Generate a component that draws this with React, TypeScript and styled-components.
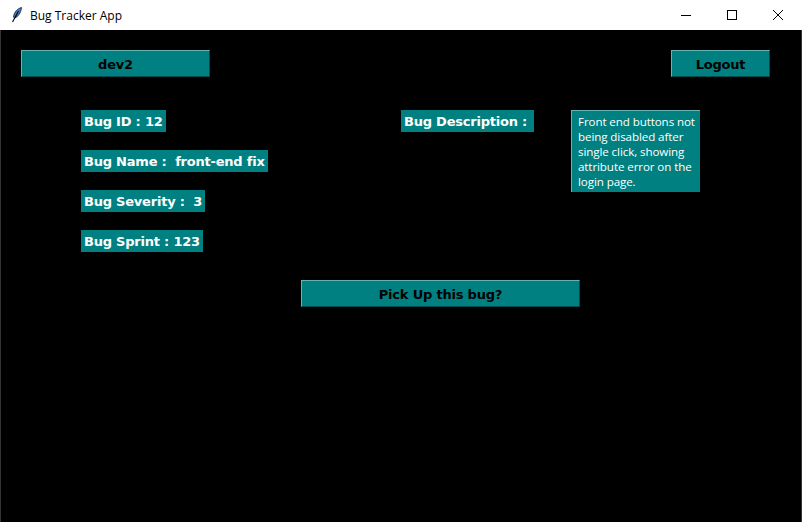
import React from 'react'
import styled, { createGlobalStyle } from 'styled-components'

const TEAL = '#008080'

const GlobalStyle = createGlobalStyle`
  html, body {
    margin: 0;
    padding: 0;
    background: #000;
  }
`

const Window = styled.div`
  width: 802px;
  height: 522px;
  display: flex;
  flex-direction: column;
  overflow: hidden;
  background: #000;
`

const TitleBar = styled.div`
  height: 30px;
  flex: none;
  display: flex;
  align-items: center;
  background: #fff;
  padding: 0 1px 0 11px;
`

const AppIcon = styled.svg`
  width: 12px;
  height: 16px;
  margin-right: 7px;
`

const Title = styled.span`
  font: 12px 'Open Sans', sans-serif;
  color: #000;
  flex: 1;
`

const WinButton = styled.div`
  width: 46px;
  height: 30px;
  display: flex;
  align-items: center;
  justify-content: center;
`

const Body = styled.div`
  flex: 1;
  display: flex;
  flex-direction: column;
  padding: 20px 32px 0 21px;
  box-shadow: inset 1px 0 0 #333, inset -1px 0 0 #333;
`

const TopRow = styled.div`
  display: flex;
  justify-content: space-between;
`

const TkButton = styled.div<{ $width: number }>`
  width: ${p => p.$width}px;
  height: 27px;
  box-sizing: border-box;
  padding-top: 2px;
  display: flex;
  align-items: center;
  justify-content: center;
  background: ${TEAL};
  border-style: solid;
  border-width: 1px;
  border-color: #66b3b3 #004d4d #004d4d #66b3b3;
  color: #000;
  font: bold 13px 'DejaVu Sans', Verdana, sans-serif;
  letter-spacing: -0.2px;
`

const Details = styled.div`
  display: flex;
  margin: 33px 0 0 60px;
`

const LeftColumn = styled.div`
  width: 320px;
  display: flex;
  flex-direction: column;
  align-items: flex-start;
  gap: 18px;
`

const Field = styled.div`
  height: 22px;
  padding: 0 3px;
  display: flex;
  align-items: center;
  background: ${TEAL};
  color: #fff;
  font: bold 13px 'DejaVu Sans', Verdana, sans-serif;
  letter-spacing: -0.22px;
  white-space: pre;
`

const DescriptionLabel = styled(Field)`
  width: 133px;
  box-sizing: border-box;
  margin-right: 37px;
`

const DescriptionBox = styled.div`
  width: 129px;
  height: 82px;
  box-sizing: border-box;
  padding: 3px 0 0 6px;
  background: ${TEAL};
  border-style: solid;
  border-width: 1px 0 0 1px;
  border-color: #66b3b3;
  color: #fff;
  font: 11.6px/15px 'Open Sans', Tahoma, sans-serif;
  letter-spacing: -0.1px;
  white-space: pre;
`

const ActionRow = styled.div`
  margin: 28px 0 0 280px;
`

const fields = ['Bug ID : 12', 'Bug Name :  front-end fix', 'Bug Severity :  3', 'Bug Sprint : 123']

const description = [
  'Front end buttons not',
  'being disabled after',
  'single click, showing',
  'attribute error on the',
  'login page.',
].join('\n')

const App = () => {
  return (
    <Window>
      <GlobalStyle />
      <TitleBar>
        <AppIcon viewBox="0 0 12 16">
          <path d="M10.5 0.5 C6.5 1.5 3 5 2.5 10 L3.5 11 C7 10 10 6 10.5 0.5 Z" fill="#4a7cc4" stroke="#10203a" strokeWidth="0.8" />
          <path d="M7.5 4 L1.5 15" stroke="#000" strokeWidth="1.1" fill="none" />
        </AppIcon>
        <Title>Bug Tracker App</Title>
        <WinButton>
          <svg width="10" height="10" viewBox="0 0 10 10">
            <path d="M0 5.5 H10" stroke="#000" strokeWidth="1" />
          </svg>
        </WinButton>
        <WinButton>
          <svg width="10" height="10" viewBox="0 0 10 10">
            <rect x="0.5" y="0.5" width="9" height="9" fill="none" stroke="#000" strokeWidth="1" />
          </svg>
        </WinButton>
        <WinButton>
          <svg width="10" height="10" viewBox="0 0 10 10">
            <path d="M0 0 L10 10 M10 0 L0 10" stroke="#000" strokeWidth="1" />
          </svg>
        </WinButton>
      </TitleBar>
      <Body>
        <TopRow>
          <TkButton $width={189}>dev2</TkButton>
          <TkButton $width={99}>Logout</TkButton>
        </TopRow>
        <Details>
          <LeftColumn>
            {fields.map(text => (
              <Field key={text}>{text}</Field>
            ))}
          </LeftColumn>
          <DescriptionLabel>Bug Description :</DescriptionLabel>
          <DescriptionBox>{description}</DescriptionBox>
        </Details>
        <ActionRow>
          <TkButton $width={279}>Pick Up this bug?</TkButton>
        </ActionRow>
      </Body>
    </Window>
  )
}

export default App
